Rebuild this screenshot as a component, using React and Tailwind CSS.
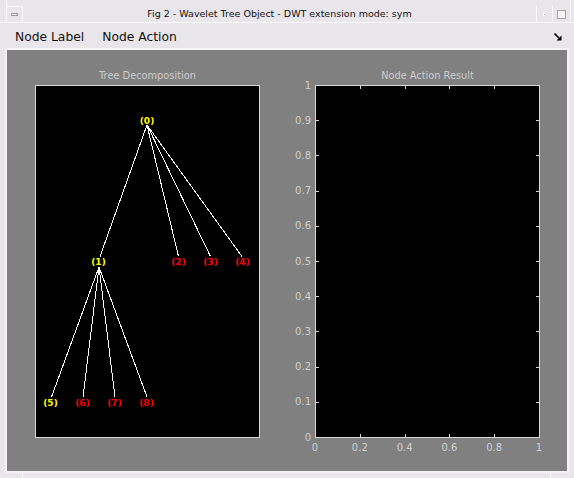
import React from "react";

const TREE = [
  { id: 0, x: 147, y: 121, c: "#ffff00" },
  { id: 1, x: 98.5, y: 262, c: "#ffff00" },
  { id: 2, x: 178.5, y: 262, c: "#ff0000" },
  { id: 3, x: 210.5, y: 262, c: "#ff0000" },
  { id: 4, x: 242.5, y: 262, c: "#ff0000" },
  { id: 5, x: 50.5, y: 403, c: "#ffff00" },
  { id: 6, x: 82.5, y: 403, c: "#ff0000" },
  { id: 7, x: 114.5, y: 403, c: "#ff0000" },
  { id: 8, x: 146.5, y: 403, c: "#ff0000" },
];

const EDGES = [
  [147, 125, 100, 256.5],
  [147, 125, 178.5, 256.5],
  [147, 125, 210.5, 256.5],
  [147, 125, 242, 256.5],
  [99, 267, 51.5, 397],
  [99, 267, 83, 397],
  [99, 267, 115, 397],
  [99, 267, 147, 397],
];

const TICKS = [0.1, 0.2, 0.3, 0.4, 0.5, 0.6, 0.7, 0.8, 0.9];
const Y_LABELS = ["0", "0.1", "0.2", "0.3", "0.4", "0.5", "0.6", "0.7", "0.8", "0.9", "1"];
const X_LABELS = ["0", "0.2", "0.4", "0.6", "0.8", "1"];

function TreeAxes() {
  return (
    <svg width="223" height="351" viewBox="36 86 223 351" className="block" shapeRendering="crispEdges">
      {EDGES.map(([x1, y1, x2, y2], i) => (
        <line key={i} x1={x1} y1={y1} x2={x2} y2={y2} stroke="#ffffff" strokeWidth="1" />
      ))}
      {TREE.map((n) => (
        <text
          key={n.id}
          x={n.x}
          y={n.y}
          fill={n.c}
          fontSize="9"
          fontWeight="bold"
          textAnchor="middle"
          dominantBaseline="central"
          fontFamily="'DejaVu Sans', sans-serif"
          shapeRendering="auto"
        >
          ({n.id})
        </text>
      ))}
    </svg>
  );
}

function ResultAxes() {
  return (
    <svg width="223" height="351" viewBox="36 86 223 351" className="block overflow-visible">
      {TICKS.map((v) => {
        const y = Math.round(437 - v * 352) + 0.5;
        return (
          <g key={"y" + v} stroke="#d4d4d4">
            <line x1="36" y1={y} x2="39" y2={y} />
            <line x1="256" y1={y} x2="259" y2={y} />
          </g>
        );
      })}
      {[0.2, 0.4, 0.6, 0.8].map((v) => {
        const x = Math.round(35 + v * 224) + 0.5;
        return (
          <g key={"x" + v} stroke="#d4d4d4">
            <line x1={x} y1="86" x2={x} y2="89" />
            <line x1={x} y1="434" x2={x} y2="437" />
          </g>
        );
      })}
      {Y_LABELS.map((l, i) => (
        <text
          key={"yl" + l}
          x="31"
          y={437 - i * 35.2}
          fill="#cfcfcf"
          fontSize="10"
          textAnchor="end"
          dominantBaseline="central"
          fontFamily="'DejaVu Sans', sans-serif"
        >
          {l}
        </text>
      ))}
      {X_LABELS.map((l, i) => (
        <text
          key={"xl" + l}
          x={35 + i * 44.8}
          y="447.5"
          fill="#cfcfcf"
          fontSize="10"
          textAnchor="middle"
          dominantBaseline="central"
          fontFamily="'DejaVu Sans', sans-serif"
        >
          {l}
        </text>
      ))}
    </svg>
  );
}

function Column({ title, children }) {
  return (
    <div className="flex flex-col items-center w-[225px]">
      <p className="h-[15px] leading-[15px] text-[9.8px] text-[#cdcdcd] mb-[2px] whitespace-nowrap">{title}</p>
      <div className="w-[225px] h-[353px] border border-[#d9d9d9] bg-black">{children}</div>
    </div>
  );
}

export default function App() {
  return (
    <div
      className="w-[574px] h-[478px] bg-[#e8e6ea] overflow-hidden text-black"
      style={{ fontFamily: "'DejaVu Sans', sans-serif" }}
    >
      {/* title bar */}
      <div className="h-[23px] flex border-b border-[#fbfbfc]">
        <div className="w-[7px] border-r border-[#fbfbfc]" />
        <div className="w-[16px] mt-[6px] border-t border-r border-[#fbfbfc] flex items-center justify-center">
          <div className="w-[7px] h-[3px] border border-[#9a9a9a] bg-white" />
        </div>
        <div className="flex-1 pt-[7px] flex items-center justify-center text-[9.5px] text-[#111] whitespace-nowrap">
          Fig 2 - Wavelet Tree Object - DWT extension mode: sym
        </div>
        <div className="w-[16px] mt-[6px] border-l border-[#fbfbfc] flex items-center justify-center">
          <div className="w-[3px] h-[3px] bg-[#a0a0a0] border border-white" />
        </div>
        <div className="w-[18px] mt-[6px] border-l border-[#fbfbfc] flex items-center justify-center">
          <div className="w-[9px] h-[9px] border border-[#a4a4a4] bg-[#f4f4f5]" />
        </div>
        <div className="w-[4px] border-l border-[#fbfbfc]" />
      </div>

      {/* menu bar */}
      <div className="h-[25px] flex items-center pt-[3px] pl-[15px] pr-[12px] text-[12.3px] text-[#111]">
        <span>Node Label</span>
        <span className="ml-[18px]">Node Action</span>
        <svg className="ml-auto" width="8" height="8" viewBox="0 0 8 8">
          <path d="M0.5 0.5 L5 5" stroke="#000" strokeWidth="1.6" />
          <path d="M7.5 2.5 L7.5 7.5 L2.5 7.5 Z" fill="#000" />
        </svg>
      </div>

      {/* figure area */}
      <div className="ml-[5px] w-[564px] h-[425px] border-2 border-[#f4f3f6] bg-[#808080] flex gap-[55px] pl-[28px] pt-[18px]">
        <Column title="Tree Decomposition">
          <TreeAxes />
        </Column>
        <Column title="Node Action Result">
          <ResultAxes />
        </Column>
      </div>

      {/* bottom frame */}
      <div className="h-[5px] flex">
        <div className="ml-[22px] w-px bg-[#fbfbfc]" />
        <div className="ml-[527px] w-px bg-[#fbfbfc]" />
      </div>
    </div>
  );
}
